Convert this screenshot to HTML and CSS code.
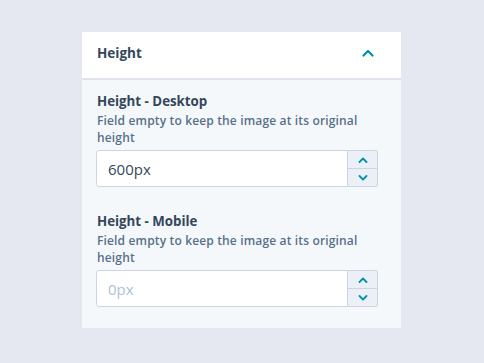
FILE: index.html
```html
<!DOCTYPE html>
<html lang="en">
<head>
    <meta charset="UTF-8">
    <title>Height</title>
    <link rel="stylesheet" href="styles.css">
</head>
<body>
<div class="panel">
    <div class="panel-head">
        <span class="panel-title">Height</span>
        <svg class="chevron" width="12" height="8" viewBox="0 0 12 8"><path d="M1.5 6.5 L6 2 L10.5 6.5" fill="none" stroke="#0091ae" stroke-width="2.2" stroke-linecap="round" stroke-linejoin="round"/></svg>
    </div>
    <div class="panel-body">
        <section class="field">
            <label for="h-desktop">Height - Desktop</label>
            <p class="help">Field empty to keep the image at its original height</p>
            <div class="number">
                <input id="h-desktop" type="text" value="600px">
                <div class="stepper">
                    <span class="step"><svg width="10" height="6" viewBox="0 0 10 6"><path d="M1.5 5 L5 1.5 L8.5 5" fill="none" stroke="#0091ae" stroke-width="1.8" stroke-linecap="round" stroke-linejoin="round"/></svg></span>
                    <span class="step"><svg width="10" height="6" viewBox="0 0 10 6"><path d="M1.5 1 L5 4.5 L8.5 1" fill="none" stroke="#0091ae" stroke-width="1.8" stroke-linecap="round" stroke-linejoin="round"/></svg></span>
                </div>
            </div>
        </section>
        <section class="field">
            <label for="h-mobile">Height - Mobile</label>
            <p class="help">Field empty to keep the image at its original height</p>
            <div class="number">
                <input id="h-mobile" type="text" placeholder="0px">
                <div class="stepper">
                    <span class="step"><svg width="10" height="6" viewBox="0 0 10 6"><path d="M1.5 5 L5 1.5 L8.5 5" fill="none" stroke="#0091ae" stroke-width="1.8" stroke-linecap="round" stroke-linejoin="round"/></svg></span>
                    <span class="step"><svg width="10" height="6" viewBox="0 0 10 6"><path d="M1.5 1 L5 4.5 L8.5 1" fill="none" stroke="#0091ae" stroke-width="1.8" stroke-linecap="round" stroke-linejoin="round"/></svg></span>
                </div>
            </div>
        </section>
    </div>
</div>
</body>
</html>
```

FILE: styles.css
```css
*{
    margin: 0;
    padding: 0;
    box-sizing: border-box;
}
body{
    background: #e5e8f1;
    font-family: "Open Sans", "Noto Sans", sans-serif;
    color: #33475b;
    padding: 32px 83px 0 82px;
}
.panel{
    width: 319px;
    background: #f5f8fa;
}
.panel-head{
    height: 48px;
    background: #ffffff;
    border-bottom: 2px solid #dfe3eb;
    display: flex;
    align-items: center;
    justify-content: space-between;
    padding: 0 27px 4px 15px;
}
.panel-title{
    font-size: 13.5px;
    font-weight: 700;
}
.chevron{
    display: block;
}
.panel-body{
    padding: 12px 23px 21px 14px;
}
.field + .field{
    margin-top: 25px;
}
label{
    display: block;
    font-size: 13.3px;
    font-weight: 700;
    line-height: 18px;
    margin-left: 1px;
}
.help{
    font-size: 12px;
    letter-spacing: 0.15px;
    font-weight: 600;
    color: #58708b;
    line-height: 17px;
    margin: 2px 0 4px 1px;
}
.number{
    display: flex;
    height: 37px;
}
.number input{
    flex: 1;
    height: 37px;
    border: 1px solid #cbd6e2;
    border-radius: 3px 0 0 3px;
    background: #ffffff;
    font-family: inherit;
    font-size: 15px;
    color: #33475b;
    padding: 0 11px;
    outline: none;
}
.number input::placeholder{
    color: #b0c1d4;
}
.stepper{
    width: 30px;
    display: flex;
    flex-direction: column;
    border: 1px solid #cbd6e2;
    border-left: none;
    border-radius: 0 3px 3px 0;
    background: #eaf0f6;
}
.step{
    flex: 1;
    display: flex;
    align-items: center;
    justify-content: center;
}
.step + .step{
    border-top: 1px solid #cbd6e2;
}
```
